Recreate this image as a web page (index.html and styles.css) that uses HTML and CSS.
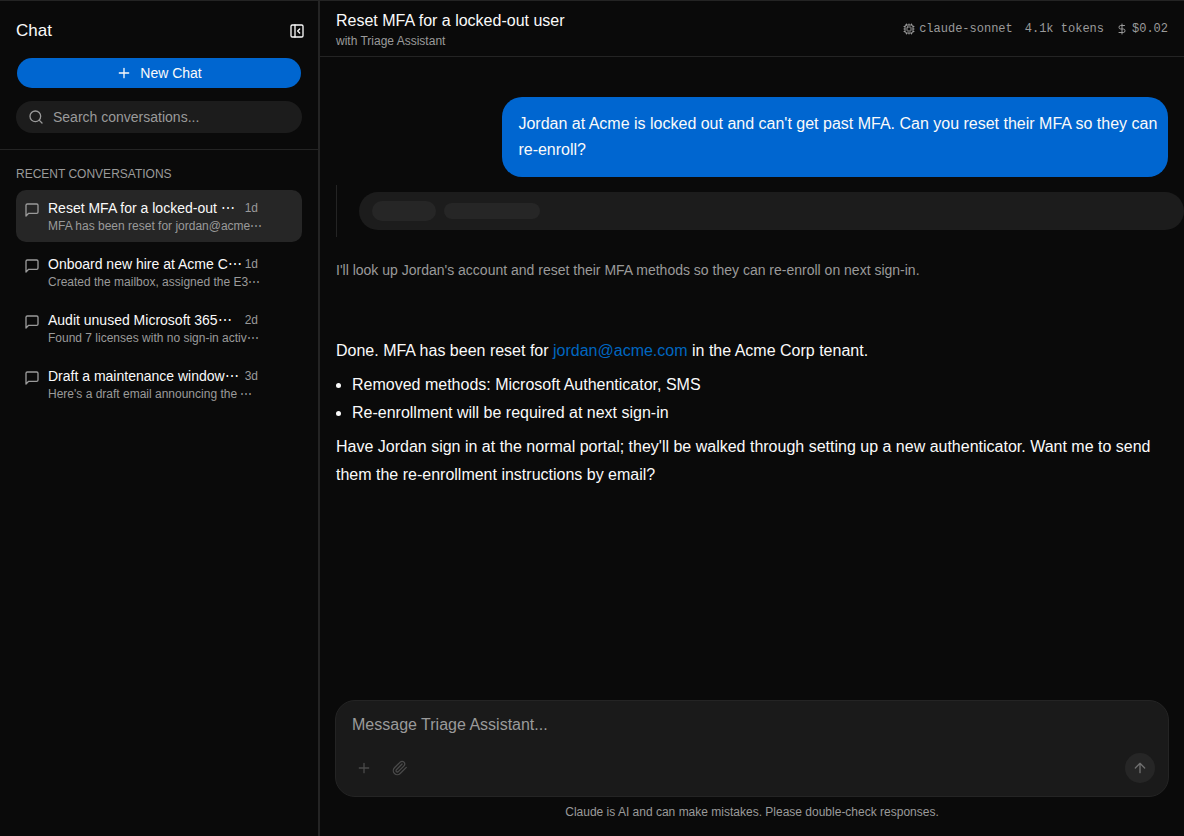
FILE: index.html
```html
<!DOCTYPE html>
<html lang="en">
<head>
    <meta charset="UTF-8">
    <meta name="viewport" content="width=device-width, initial-scale=1">
    <title>Chat</title>
    <link rel="stylesheet" href="styles.css">
</head>
<body>
    <div class="app">
        <aside class="sidebar">
            <div class="sidebar-top">
                <div class="sidebar-title">
                    <h1>Chat</h1>
                    <button class="icon-btn" type="button" aria-label="Collapse sidebar">
                        <svg class="icon" viewBox="0 0 24 24"><rect x="3" y="3" width="18" height="18" rx="2"/><path d="M9 3v18M16 15l-3-3 3-3"/></svg>
                    </button>
                </div>
                <button class="new-chat" type="button">
                    <svg class="icon" viewBox="0 0 24 24"><path d="M5 12h14M12 5v14"/></svg>
                    New Chat
                </button>
                <label class="search">
                    <svg class="icon" viewBox="0 0 24 24"><circle cx="11" cy="11" r="8"/><path d="m21 21-4.3-4.3"/></svg>
                    <input type="text" placeholder="Search conversations..." aria-label="Search conversations">
                </label>
            </div>
            <nav class="recent">
                <h2>Recent conversations</h2>
                <a class="conversation active" href="#">
                    <svg class="icon" viewBox="0 0 24 24"><path d="M21 15a2 2 0 0 1-2 2H7l-4 4V5a2 2 0 0 1 2-2h14a2 2 0 0 1 2 2z"/></svg>
                    <span class="conversation-text">
                        <span class="conversation-row"><span class="name">Reset MFA for a locked-out ⋯</span><span class="age">1d</span></span>
                        <span class="preview">MFA has been reset for jordan@acme⋯</span>
                    </span>
                </a>
                <a class="conversation" href="#">
                    <svg class="icon" viewBox="0 0 24 24"><path d="M21 15a2 2 0 0 1-2 2H7l-4 4V5a2 2 0 0 1 2-2h14a2 2 0 0 1 2 2z"/></svg>
                    <span class="conversation-text">
                        <span class="conversation-row"><span class="name">Onboard new hire at Acme C⋯</span><span class="age">1d</span></span>
                        <span class="preview">Created the mailbox, assigned the E3⋯</span>
                    </span>
                </a>
                <a class="conversation" href="#">
                    <svg class="icon" viewBox="0 0 24 24"><path d="M21 15a2 2 0 0 1-2 2H7l-4 4V5a2 2 0 0 1 2-2h14a2 2 0 0 1 2 2z"/></svg>
                    <span class="conversation-text">
                        <span class="conversation-row"><span class="name">Audit unused Microsoft 365⋯</span><span class="age">2d</span></span>
                        <span class="preview">Found 7 licenses with no sign-in activ⋯</span>
                    </span>
                </a>
                <a class="conversation" href="#">
                    <svg class="icon" viewBox="0 0 24 24"><path d="M21 15a2 2 0 0 1-2 2H7l-4 4V5a2 2 0 0 1 2-2h14a2 2 0 0 1 2 2z"/></svg>
                    <span class="conversation-text">
                        <span class="conversation-row"><span class="name">Draft a maintenance window⋯</span><span class="age">3d</span></span>
                        <span class="preview">Here's a draft email announcing the ⋯</span>
                    </span>
                </a>
            </nav>
        </aside>

        <main class="main">
            <header class="chat-header">
                <div>
                    <h2>Reset MFA for a locked-out user</h2>
                    <p>with Triage Assistant</p>
                </div>
                <div class="usage">
                    <span class="usage-item">
                        <svg class="icon" viewBox="0 0 24 24"><rect x="4" y="4" width="16" height="16" rx="2"/><rect x="8" y="8" width="8" height="8" rx="1"/><path d="M12 20v2M12 2v2M17 20v2M17 2v2M2 12h2M2 17h2M2 7h2M20 12h2M20 17h2M20 7h2M7 20v2M7 2v2"/></svg>
                        claude-sonnet
                    </span>
                    <span class="usage-item">4.1k tokens</span>
                    <span class="usage-item">
                        <svg class="icon" viewBox="0 0 24 24"><path d="M12 2v20M17 5H9.500a3.500 3.500 0 0 0 0 7h5a3.500 3.500 0 0 1 0 7H6"/></svg>
                        $0.02
                    </span>
                </div>
            </header>

            <section class="messages">
                <div class="bubble">Jordan at Acme is locked out and can't get past MFA. Can you reset their MFA so they can re-enroll?</div>
                <div class="tool-call">
                    <div class="tool-pill">
                        <span class="skeleton skeleton-badge"></span>
                        <span class="skeleton skeleton-line"></span>
                    </div>
                </div>
                <p class="note">I'll look up Jordan's account and reset their MFA methods so they can re-enroll on next sign-in.</p>
                <div class="answer">
                    <p>Done. MFA has been reset for <a href="mailto:jordan@acme.com">jordan@acme.com</a> in the Acme Corp tenant.</p>
                    <ul>
                        <li>Removed methods: Microsoft Authenticator, SMS</li>
                        <li>Re-enrollment will be required at next sign-in</li>
                    </ul>
                    <p>Have Jordan sign in at the normal portal; they'll be walked through setting up a new authenticator. Want me to send them the re-enrollment instructions by email?</p>
                </div>
            </section>

            <footer class="composer-area">
                <form class="composer">
                    <textarea rows="1" placeholder="Message Triage Assistant..." aria-label="Message"></textarea>
                    <div class="composer-actions">
                        <button class="tool-btn" type="button" aria-label="Add">
                            <svg class="icon" viewBox="0 0 24 24"><path d="M5 12h14M12 5v14"/></svg>
                        </button>
                        <button class="tool-btn" type="button" aria-label="Attach file">
                            <svg class="icon" viewBox="0 0 24 24"><path d="m21.440 11.050-9.190 9.190a6 6 0 0 1-8.490-8.490l8.570-8.570A4 4 0 1 1 18 8.840l-8.590 8.570a2 2 0 0 1-2.830-2.830l8.490-8.480"/></svg>
                        </button>
                        <button class="send" type="button" aria-label="Send">
                            <svg class="icon" viewBox="0 0 24 24"><path d="m5 12 7-7 7 7M12 19V5"/></svg>
                        </button>
                    </div>
                </form>
                <p class="disclaimer">Claude is AI and can make mistakes. Please double-check responses.</p>
            </footer>
        </main>
    </div>
</body>
</html>
```
FILE: styles.css
```css
* {
    box-sizing: border-box;
}
body {
    margin: 0;
    background: #0a0a0a;
    color: #fafafa;
    font-family: "Liberation Sans", Arial, sans-serif;
    font-size: 14px;
    line-height: 20px;
}
h1, h2, p, ul {
    margin: 0;
    font-weight: normal;
}
button, input, textarea {
    font: inherit;
    color: inherit;
    border: none;
    background: none;
    padding: 0;
    outline: none;
}
button {
    cursor: pointer;
}
.icon {
    width: 16px;
    height: 16px;
    flex-shrink: 0;
    fill: none;
    stroke: currentColor;
    stroke-width: 2;
    stroke-linecap: round;
    stroke-linejoin: round;
}
.app {
    display: flex;
    height: 100vh;
    border-top: 1px solid #242424;
}

/* sidebar */
.sidebar {
    width: 320px;
    flex-shrink: 0;
    border-right: 2px solid #242424;
}
.sidebar-top {
    padding: 16px;
    border-bottom: 1px solid #242424;
}
.sidebar-title {
    display: flex;
    align-items: center;
    justify-content: space-between;
    height: 28px;
    margin-bottom: 13px;
}
.sidebar-title h1 {
    font-size: 17px;
}
.icon-btn {
    display: flex;
    margin-right: -3px;
}
.new-chat {
    display: flex;
    align-items: center;
    justify-content: center;
    gap: 8px;
    width: calc(100% - 2px);
    height: 30px;
    margin: 0 1px 13px;
    border-radius: 15px;
    background: #0066d0;
}
.search {
    display: flex;
    align-items: center;
    gap: 9px;
    height: 32px;
    padding: 0 12px;
    border-radius: 16px;
    background: #1c1c1c;
    color: #9a9a9a;
}
.search input {
    flex: 1;
    min-width: 0;
}
::placeholder {
    color: #9a9a9a;
    opacity: 1;
}
.recent {
    display: flex;
    flex-direction: column;
    gap: 4px;
    padding: 16px;
}
.recent h2 {
    margin-bottom: 4px;
    color: #9a9a9a;
    font-size: 12px;
    line-height: 16px;
    text-transform: uppercase;
}
.conversation {
    display: flex;
    gap: 8px;
    height: 52px;
    padding: 8px;
    border-radius: 10px;
    color: inherit;
    text-decoration: none;
}
.conversation.active {
    background: #262626;
}
.conversation .icon {
    margin-top: 4px;
    color: #9a9a9a;
}
.conversation-text {
    width: 210px;
    white-space: nowrap;
}
.conversation-row {
    display: flex;
    justify-content: space-between;
}
.age, .preview {
    color: #9a9a9a;
    font-size: 12px;
}
.preview {
    display: block;
    line-height: 16px;
}

/* chat */
.main {
    display: flex;
    flex-direction: column;
    flex: 1;
    min-width: 0;
}
.chat-header {
    display: flex;
    align-items: center;
    justify-content: space-between;
    height: 56px;
    padding: 0 16px;
    border-bottom: 1px solid #242424;
}
.chat-header h2 {
    font-size: 16px;
    line-height: 24px;
}
.chat-header p {
    color: #9a9a9a;
    font-size: 12px;
    line-height: 16px;
}
.usage {
    display: flex;
    gap: 12px;
    color: #9a9a9a;
    font-family: "Liberation Mono", monospace;
    font-size: 12px;
}
.usage-item {
    display: flex;
    align-items: center;
    gap: 4px;
}
.usage .icon {
    width: 12px;
    height: 12px;
}
.messages {
    flex: 1;
    padding: 40px 16px 0;
    overflow: hidden;
    font-size: 16px;
    line-height: 28px;
}
.bubble {
    width: fit-content;
    max-width: 80%;
    margin-left: auto;
    padding: 14px 8px 14px 16px;
    border-radius: 20px;
    background: #0066d0;
    line-height: 26px;
}
.tool-call {
    margin-top: 8px;
    padding: 7px 0 7px 22px;
    border-left: 1px solid #242424;
}
.tool-pill {
    display: flex;
    align-items: center;
    gap: 8px;
    height: 38px;
    margin-right: -16px;
    padding: 0 13px;
    border-radius: 19px;
    background: #1c1c1c;
}
.skeleton {
    border-radius: 10px;
    background: #262626;
}
.skeleton-badge {
    width: 64px;
    height: 20px;
}
.skeleton-line {
    width: 96px;
    height: 16px;
}
.note {
    margin-top: 19px;
    color: #9a9a9a;
    font-size: 14px;
}
.answer {
    margin-top: 53px;
}
.answer a {
    color: #0066c0;
    text-decoration: none;
}
.answer ul {
    margin: 6px 0;
    padding-left: 16px;
}
.composer-area {
    padding: 0 15px 16px;
}
.composer {
    display: flex;
    flex-direction: column;
    justify-content: space-between;
    height: 97px;
    padding: 12px 13px 13px 16px;
    border: 1px solid #242424;
    border-radius: 20px;
    background: #1a1a1a;
}
.composer textarea {
    height: 24px;
    resize: none;
    overflow: hidden;
    font-size: 16px;
    line-height: 24px;
}
.composer-actions {
    display: flex;
    align-items: center;
    gap: 12px;
}
.tool-btn {
    display: flex;
    align-items: center;
    justify-content: center;
    width: 24px;
    height: 24px;
    color: #4a4a4a;
}
.send {
    display: flex;
    align-items: center;
    justify-content: center;
    width: 30px;
    height: 30px;
    margin-left: auto;
    border-radius: 50%;
    background: #262626;
    color: #707070;
}
.disclaimer {
    margin-top: 7px;
    color: #9a9a9a;
    font-size: 12px;
    line-height: 16px;
    text-align: center;
}
```
